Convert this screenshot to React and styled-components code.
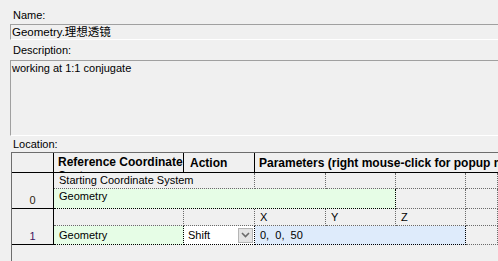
import styled, { createGlobalStyle } from "styled-components";

const GlobalStyle = createGlobalStyle`
   html, body {
      margin: 0;
      padding: 0;
      background: #f0f0f0;
   }
   body {
      font-family: "Liberation Sans", "Noto Sans CJK SC", sans-serif;
      font-size: 11px;
      color: #000;
      overflow: hidden;
   }
`;

const rows = [
   { id: 0, top: "Starting Coordinate System", ref: "Geometry" },
   { id: 1, ref: "Geometry", action: "Shift", params: "0,  0,  50" },
];

export default function App() {
   return (
      <>
         <GlobalStyle />
         <Window>
            <Label top={9} bottom={2}>Name:</Label>
            <NameBox>Geometry.理想透镜</NameBox>
            <Label top={4} bottom={3}>Description:</Label>
            <DescBox>working at 1:1 conjugate</DescBox>
            <Label top={2} bottom={1}>Location:</Label>
            <Grid>
               <HeadCell />
               <HeadCell wrap="true">Reference Coordinate System</HeadCell>
               <HeadCell pad={6}>Action</HeadCell>
               <HeadCell span={4} last="true">
                  Parameters (right mouse-click for popup menu)
               </HeadCell>

               <RowHead row="2 / span 2" color="#2e1f10">{rows[0].id}</RowHead>
               <Cell span={2} overflow="true">{rows[0].top}</Cell>
               <Cell />
               <Cell />
               <Cell />
               <Cell />
               <Cell span={4} bg="#e6fde6" strong="true" padTop={1}>
                  {rows[0].ref}
               </Cell>
               <Cell />
               <Cell />

               <RowHead row="4 / span 2" color="#3f1460">{rows[1].id}</RowHead>
               <Cell />
               <Cell />
               <Cell>X</Cell>
               <Cell>Y</Cell>
               <Cell>Z</Cell>
               <Cell />
               <Cell bg="#e6fde6" strong="true">{rows[1].ref}</Cell>
               <ActionCell>
                  {rows[1].action}
                  <DropButton>
                     <svg width="9" height="6" viewBox="0 0 9 6">
                        <path d="M1 1 L4.5 4.5 L8 1" stroke="#6a6a6a" strokeWidth="1.6" fill="none" />
                     </svg>
                  </DropButton>
               </ActionCell>
               <Cell span={3} bg="#deebfb" strong="true" pad={5}>
                  {rows[1].params}
               </Cell>
               <Cell />
            </Grid>
         </Window>
      </>
   );
}

const Window = styled.div`
   width: 498px;
   height: 261px;
   padding-left: 10px;
   box-sizing: border-box;
   display: flex;
   flex-direction: column;
`;

const Label = styled.div`
   line-height: 13px;
   height: 13px;
   padding: ${(p) => p.top}px 0 ${(p) => p.bottom}px 3px;
   font-size: 11px;
`;

const Field = styled.div`
   border-top: 1px solid #a0a0a0;
   border-left: 1px solid #a0a0a0;
   border-bottom: 1px solid #ffffff;
   box-sizing: border-box;
   white-space: nowrap;
`;

const NameBox = styled(Field)`
   height: 16px;
   font-size: 11.5px;
   line-height: 14px;
   padding-left: 1px;
`;

const DescBox = styled(Field)`
   height: 76px;
   line-height: 13px;
   padding: 1px 0 0 1px;
`;

const Grid = styled.div`
   flex: 1;
   margin-left: 1px;
   display: grid;
   grid-template-columns: 42px 130px 71px 71px 70px 70px 1fr;
   grid-template-rows: 20px 16px 20px 17px 19px;
   align-content: start;
   border-top: 1px solid #6d6d6d;
   border-left: 1px solid #6d6d6d;
   overflow: hidden;
`;

const HeadCell = styled.div`
   grid-column: span ${(p) => p.span || 1};
   box-sizing: border-box;
   border-right: ${(p) => (p.last ? "none" : "1px solid #000")};
   border-bottom: 1px solid #000;
   padding: ${(p) => (p.wrap ? "2px" : "0")} 0 0 ${(p) => p.pad || 4}px;
   display: flex;
   align-items: ${(p) => (p.wrap ? "flex-start" : "center")};
   font-size: 12px;
   font-weight: bold;
   line-height: 14px;
   white-space: ${(p) => (p.wrap ? "normal" : "nowrap")};
   overflow: hidden;
`;

const RowHead = styled.div`
   grid-row: ${(p) => p.row};
   grid-column: 1;
   box-sizing: border-box;
   border-right: 1px solid #000;
   border-bottom: 1px solid #000;
   display: flex;
   align-items: flex-end;
   justify-content: center;
   padding-bottom: 1px;
   line-height: 13px;
   color: ${(p) => p.color};
`;

const Cell = styled.div`
   grid-column: span ${(p) => p.span || 1};
   box-sizing: border-box;
   background: ${(p) => p.bg || "transparent"};
   border-right: 1px dotted ${(p) => (p.strong ? "#000" : "#6a6a6a")};
   border-bottom: 1px dotted ${(p) => (p.strong ? "#000" : "#6a6a6a")};
   padding: ${(p) => p.padTop || 0}px 0 0 ${(p) => p.pad || 5}px;
   display: flex;
   align-items: ${(p) => (p.padTop ? "flex-start" : "center")};
   line-height: 13px;
   white-space: pre;
   overflow: ${(p) => (p.overflow ? "visible" : "hidden")};
   position: relative;
   z-index: ${(p) => (p.overflow ? 1 : 0)};
`;

const ActionCell = styled.div`
   box-sizing: border-box;
   background: #ffffff;
   border-right: 1px dotted #000;
   border-bottom: 1px dotted #000;
   border-left: 1px dotted #000;
   margin-left: -1px;
   padding-left: 4px;
   display: flex;
   align-items: center;
   justify-content: space-between;
   line-height: 13px;
`;

const DropButton = styled.div`
   width: 15px;
   height: 15px;
   margin-right: 1px;
   box-sizing: border-box;
   background: #e3e3e3;
   border: 1px solid #b5b5b5;
   display: flex;
   align-items: center;
   justify-content: center;
`;
